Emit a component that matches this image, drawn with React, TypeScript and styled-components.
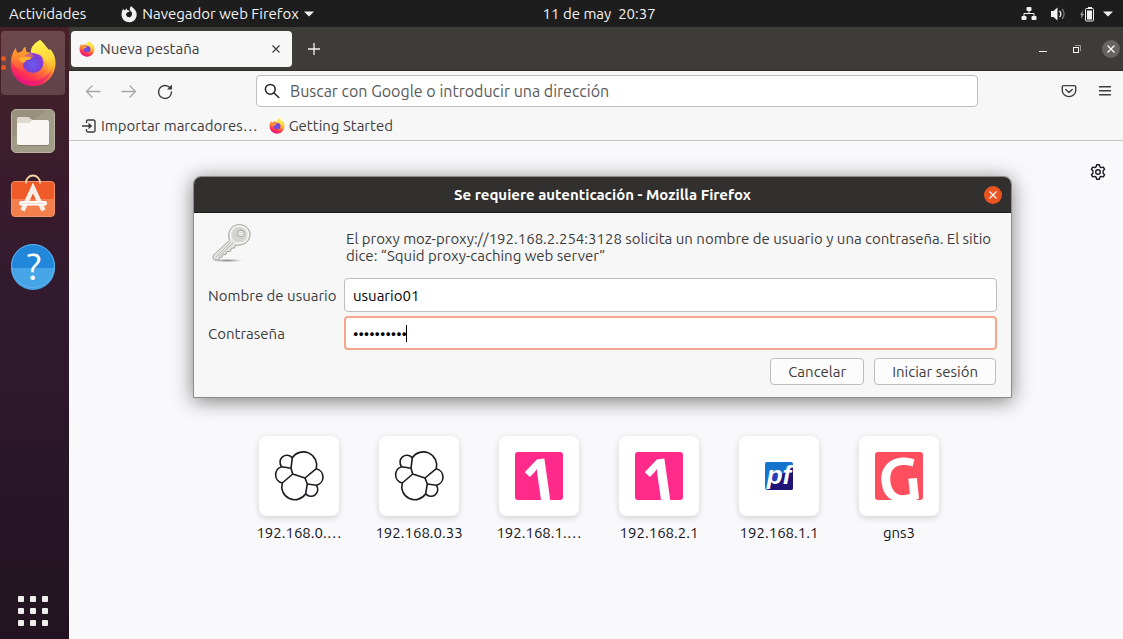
import React from "react";
import styled, { createGlobalStyle } from "styled-components";

const GlobalStyle = createGlobalStyle`
  *, *::before, *::after { box-sizing: border-box; }
  html, body, #root { height: 100%; margin: 0; }
  body, button, input {
    font-family: Ubuntu, "Noto Sans", "Open Sans", sans-serif;
    font-size: 15px;
  }
  button { margin: 0; padding: 0; border: 0; background: none; color: inherit; cursor: pointer; }
  svg { display: block; flex: none; overflow: visible; }
`;

const Desktop = styled.div`
  display: flex;
  flex-direction: column;
  min-height: 100%;
  overflow: hidden;
`;

/* ---------- GNOME top bar ---------- */

const TopBar = styled.header`
  display: grid;
  grid-template-columns: 7fr auto 6fr;
  align-items: center;
  height: 27px;
  padding: 0 10px 0 9px;
  background: #1d1d1d;
  color: #f2f2f2;
  line-height: 27px;
`;

const TopGroup = styled.div<{ $end?: boolean; $gap: number }>`
  display: flex;
  align-items: center;
  justify-content: ${(p) => (p.$end ? "flex-end" : "flex-start")};
  gap: ${(p) => p.$gap}px;
`;

const TopButton = styled.button`
  display: flex;
  align-items: center;
  gap: 5px;
  height: 27px;
  white-space: pre;
`;

/* ---------- Dock ---------- */

const Workspace = styled.div`
  display: flex;
  flex: 1;
`;

const Dock = styled.nav`
  display: flex;
  flex-direction: column;
  gap: 4px;
  width: 69px;
  padding: 4px 4px 13px 1px;
  background: linear-gradient(#4a2027 0%, #40202a 11%, #3a1b2b 25%, #301a2e 45%, #2a1728 70%, #211420 100%);
`;

const DockButton = styled.button<{ $active?: boolean }>`
  position: relative;
  display: grid;
  place-items: center;
  width: 64px;
  height: 64px;
  border-radius: 4px;
  background: ${(p) => (p.$active ? "linear-gradient(#6b484b, #62434c)" : "none")};
`;

const RunningDots = styled.span`
  position: absolute;
  left: 0;
  top: 25px;
  display: flex;
  flex-direction: column;
  gap: 4px;

  &::before, &::after {
    content: "";
    width: 5px;
    height: 5px;
    border-radius: 50%;
    background: #e95420;
  }
`;

const AppsButton = styled.button`
  display: grid;
  grid-template-columns: repeat(3, 6px);
  gap: 6px;
  margin: auto auto 0 17px;
`;

const AppsDot = styled.span`
  width: 6px;
  height: 6px;
  border-radius: 1px;
  background: #eeeeec;
`;

/* ---------- Browser window ---------- */

const BrowserWindow = styled.main`
  position: relative;
  display: flex;
  flex: 1;
  flex-direction: column;
  min-width: 0;
  background: #f9f9fb;
`;

const TabBar = styled.div`
  display: flex;
  align-items: center;
  height: 44px;
  padding: 0 3px 0 2px;
  border-bottom: 1px solid #2c2b29;
  background: #3d3c39;
  color: #f2f2f2;
`;

const Tab = styled.div`
  display: flex;
  align-items: center;
  gap: 5px;
  width: 221px;
  height: 36px;
  padding: 0 8px;
  border-radius: 4px;
  background: #f7f7f7;
  color: #3d3d3d;
`;

const TabTitle = styled.span`
  flex: 1;
`;

const IconButton = styled.button<{ $size?: number }>`
  display: grid;
  place-items: center;
  width: ${(p) => p.$size ?? 16}px;
  height: ${(p) => p.$size ?? 16}px;
`;

const WindowControls = styled.div`
  display: flex;
  align-items: center;
  gap: 16px;
  margin-left: auto;
`;

const RoundClose = styled.button<{ $accent?: boolean }>`
  display: grid;
  place-items: center;
  width: 18px;
  height: 18px;
  border-radius: 50%;
  background: ${(p) => (p.$accent ? "#e95420" : "#656463")};
  color: #fff;
`;

const NavBar = styled.div`
  display: flex;
  align-items: center;
  gap: 20px;
  height: 40px;
  padding: 0 10px 0 16px;
  background: #f7f7f7;
  color: #3d3d3d;
`;

const UrlBar = styled.label`
  display: flex;
  align-items: center;
  gap: 10px;
  flex: 1;
  height: 32px;
  margin: 0 63px;
  padding: 0 7px;
  border: 1px solid #bdbdbd;
  border-radius: 4px;
  background: #fff;
`;

const UrlInput = styled.input`
  flex: 1;
  min-width: 0;
  padding: 0;
  border: 0;
  outline: 0;
  background: transparent;
  font-size: 16px;

  &::placeholder { color: #5a5a5a; opacity: 1; }
`;

const BookmarksBar = styled.div`
  display: flex;
  align-items: center;
  gap: 11px;
  height: 30px;
  padding: 0 12px;
  border-bottom: 1px solid #c2c2c2;
  background: #f7f7f7;
`;

const Bookmark = styled.a`
  display: flex;
  align-items: center;
  gap: 4px;
  color: #3d3d3d;
  text-decoration: none;
  white-space: nowrap;
`;

const NewTabPage = styled.section`
  display: flex;
  flex-direction: column;
  padding: 23px 17px 0 23px;
`;

const SettingsButton = styled(IconButton)`
  align-self: flex-end;
`;

const Shortcuts = styled.div`
  display: flex;
  justify-content: center;
  padding-top: 256px;
`;

const Shortcut = styled.a`
  display: flex;
  flex-direction: column;
  align-items: center;
  gap: 8px;
  width: 120px;
  color: #15141a;
  line-height: 18px;
  text-decoration: none;
`;

const ShortcutTile = styled.span`
  display: grid;
  place-items: center;
  width: 80px;
  height: 80px;
  border-radius: 8px;
  background: #fff;
  box-shadow: 0 2px 6px rgba(58, 57, 68, 0.2);
`;

/* ---------- Authentication dialog ---------- */

const Dialog = styled.form`
  position: absolute;
  top: 149px;
  left: 124px;
  right: 111px;
  border: 1px solid #8a8a8a;
  border-radius: 8px 8px 0 0;
  background: #f7f7f7;
  box-shadow: 0 3px 20px rgba(0, 0, 0, 0.5);
  color: #3d3d3d;
`;

const DialogTitleBar = styled.div`
  display: grid;
  grid-template-columns: 18px 1fr 18px;
  align-items: center;
  height: 36px;
  padding: 0 9px;
  border-bottom: 1px solid #1f1c1c;
  border-radius: 7px 7px 0 0;
  background: #322f2f;
  color: #fff;
`;

const DialogTitle = styled.h1`
  grid-column: 2;
  margin: 0;
  font-size: 15px;
  font-weight: 700;
  text-align: center;
`;

const DialogBody = styled.div`
  display: grid;
  grid-template-columns: 136px 1fr;
  row-gap: 4px;
  align-items: center;
  padding: 9px 14px 12px;
`;

const KeyCell = styled.div`
  align-self: start;
  padding-left: 3px;
`;

const Message = styled.p`
  margin: 0;
  padding: 8px 2px 10px;
  line-height: 17px;
`;

const FieldLabel = styled.label`
  white-space: nowrap;
`;

const Field = styled.div`
  position: relative;
`;

const TextInput = styled.input<{ $focused?: boolean }>`
  display: block;
  width: 100%;
  height: 34px;
  padding: 0 ${(p) => (p.$focused ? 7 : 8)}px;
  border: ${(p) => (p.$focused ? "2px solid #f4a78c" : "1px solid #bdbdbd")};
  border-radius: 4px;
  outline: 0;
  background: #fff;
  color: #000;
`;

const Caret = styled.span`
  position: absolute;
  left: 62px;
  top: 9px;
  width: 1px;
  height: 17px;
  background: #000;
`;

const DialogActions = styled.div`
  display: flex;
  grid-column: 1 / -1;
  justify-content: flex-end;
  gap: 10px;
  padding: 4px 1px 0 0;
`;

const DialogButton = styled.button`
  height: 27px;
  padding: 0 17px;
  border: 1px solid #bdbdbd;
  border-radius: 4px;
  background: #fcfcfc;
`;

/* ---------- Icons ---------- */

const FirefoxIcon = ({ size, id }: { size: number; id: string }) => (
  <svg width={size} height={size} viewBox="0 0 48 48" aria-hidden="true">
    <defs>
      <linearGradient id={`${id}-body`} x1="0.82" y1="0.1" x2="0.3" y2="1">
        <stop offset="0" stopColor="#fff44f" />
        <stop offset="0.3" stopColor="#ffc02e" />
        <stop offset="0.55" stopColor="#ff7139" />
        <stop offset="0.8" stopColor="#ff2d55" />
        <stop offset="1" stopColor="#e31587" />
      </linearGradient>
      <radialGradient id={`${id}-globe`} cx="0.5" cy="0.6" r="0.6">
        <stop offset="0" stopColor="#6a5cf0" />
        <stop offset="0.6" stopColor="#7542d6" />
        <stop offset="1" stopColor="#a33be0" />
      </radialGradient>
      <linearGradient id={`${id}-flame`} x1="0.4" y1="0" x2="0.6" y2="1">
        <stop offset="0" stopColor="#fff44f" />
        <stop offset="0.6" stopColor="#ffd43a" />
        <stop offset="1" stopColor="#ff9a27" stopOpacity="0.3" />
      </linearGradient>
      <linearGradient id={`${id}-fox`} x1="0" y1="0" x2="0.4" y2="1">
        <stop offset="0" stopColor="#ffa52a" />
        <stop offset="1" stopColor="#ff7a2c" stopOpacity="0.2" />
      </linearGradient>
    </defs>
    <path
      d="M31 1C35 4 37 8 40 11l1-1c4 4 5.500 9 5.500 14C46.500 37 36.500 47 24 47S1.800 37 1.800 25C1.800 18 4 13 7 9c0 2 .5 4 1.500 5 2-1 4-1 5-2 .5-2 1.500-3.200 3-3.900-.3 2 .5 4 1.500 5.200 2 0 3 .4 4 1C21 8 26 4 31 1z"
      fill={`url(#${id}-body)`}
    />
    <circle cx="24" cy="23.500" r="10.500" fill={`url(#${id}-globe)`} />
    <path d="M31 1c5 4 6 8 10 12 5 6 5 17-1 23-2-4 0-10-4-15-3-5-8-7-14-7C22 8 26 4 31 1z" fill={`url(#${id}-flame)`} />
    <path d="M7 9c0 2 .5 4 1.500 5 2-1 4-1 5-2 .5-2 1.500-3.200 3-3.900-.3 2 .5 4 1.500 5.200 3 .2 5 1.700 6.500 3.700 0 2-5 2-6 3-1 1-1 3-3 4-2.500 1.500-2 6 0 9-7-2-12-7-13.500-12C3 16 4.500 12 7 9z" fill={`url(#${id}-fox)`} />
    <path d="M9 20c4-3 8-2 13-2 1 1.500-1 3-4 3-1 0-2 2-4 3-2-2-3-3-5-4z" fill="#ffb02e" />
    <path d="M3 29c2 7 9 13 19 13 9 0 17-4 21-12-3 10-10 16-19 16S6 40 3 29z" fill="#e6157f" opacity=".55" />
  </svg>
);

const FirefoxSymbolic = () => (
  <svg width="16" height="16" viewBox="0 0 16 16" fill="#f2f2f2" aria-hidden="true">
    <path
      fillRule="evenodd"
      d="M10.200 0c1 1.300 2.300 2 3.400 3.400A7.600 7.600 0 1 1 .6 7.500C.7 5.500 1.300 4 2.300 2.700l.6 1.600 1.500-.4c.2-.8.6-1.300 1.200-1.700.1 1 .4 1.700 1.300 2.100.7.200 1.300.3 1.800.9-.4.8-1.900.8-2.500 1.300C5 7.300 4.800 8.500 5.300 9.600c1 2.100 4 2.200 5.200.4 1.300-2.200.2-4.500-1.400-5.400C8.500 2.800 9 1.200 10.200 0z"
    />
  </svg>
);

const FilesIcon = () => (
  <svg width="46" height="46" viewBox="0 0 46 46" aria-hidden="true">
    <rect x="1.500" y="1.500" width="43" height="43" rx="4.500" fill="#99917d" stroke="#b9b4a3" />
    <path d="M2 30 36 2h5a3 3 0 0 1 3 3v36a3 3 0 0 1-3 3H5a3 3 0 0 1-3-3z" fill="#a9a28e" opacity=".6" />
    <path d="M7 11a2 2 0 0 1 2-2h9c2 0 3 3 5 3h14v8H7z" fill="#dedace" />
    <path d="M7 15h12c2 0 2-3 5-3h13a2 2 0 0 1 2 2v21a2 2 0 0 1-2 2H9a2 2 0 0 1-2-2z" fill="#f8f7f5" />
    <path d="M8 37.500h30" stroke="#827b68" />
  </svg>
);

const SoftwareIcon = () => (
  <svg width="46" height="46" viewBox="0 3 46 46" aria-hidden="true">
    <rect x="1.500" y="8.500" width="43" height="35" rx="3.500" fill="#ee5a28" stroke="#f0936a" />
    <path d="M2 26h42v14a3 3 0 0 1-3 3H5a3 3 0 0 1-3-3z" fill="#f27f4c" />
    <path d="M16 10.500v-1a7 7 0 0 1 14 0v1" fill="none" stroke="#f5d6a0" strokeWidth="1.800" />
    <path d="M12.500 37.500 23 15l10.500 22.500" fill="none" stroke="#fbeee8" strokeWidth="4.600" />
    <rect x="9" y="28" width="28" height="4.600" rx="2.300" fill="#fff" />
    <path d="M11 30.300h24" stroke="#e9c6b6" strokeWidth=".8" />
  </svg>
);

const HelpIcon = () => (
  <svg width="46" height="46" viewBox="0 1 46 46" aria-hidden="true">
    <circle cx="23" cy="23" r="22" fill="#2087da" />
    <path d="M1 25h44a22 22 0 0 1-44 0z" fill="#45a5e6" />
    <circle cx="23" cy="23" r="21.500" fill="none" stroke="#62b2ea" />
    <text x="24" y="37" textAnchor="middle" fontSize="38" fill="#fff">?</text>
  </svg>
);

const ArrowIcon = ({ back }: { back?: boolean }) => (
  <svg width="16" height="16" viewBox="0 0 16 16" fill="none" stroke="#a6a6a6" strokeWidth="1.300" strokeLinecap="round" strokeLinejoin="round" aria-hidden="true">
    <path d={back ? "M15 8.500H1.500M7 3 1.500 8.500 7 14" : "M1 8.500h13.500M9 3 14.500 8.500 9 14"} />
  </svg>
);

const ReloadIcon = () => (
  <svg width="16" height="16" viewBox="0 0 16 16" fill="none" stroke="#3d3d3d" strokeWidth="1.400" strokeLinecap="round" aria-hidden="true">
    <path d="M13 4.800A6.500 6.500 0 1 0 14.500 9" />
    <path d="M15 1.500v5h-5z" fill="#3d3d3d" stroke="none" />
  </svg>
);

const SearchIcon = () => (
  <svg width="16" height="16" viewBox="0 0 16 16" fill="none" stroke="#222" strokeWidth="1.500" strokeLinecap="round" aria-hidden="true">
    <circle cx="6.300" cy="6.300" r="4.900" />
    <path d="m10 10 4.800 4.500" />
  </svg>
);

const CrossIcon = ({ size }: { size: number }) => (
  <svg width={size} height={size} viewBox="0 0 8 8" fill="none" stroke="currentColor" strokeWidth="1.200" aria-hidden="true">
    <path d="m.5.5 7 7m0-7-7 7" />
  </svg>
);

const PlusIcon = () => (
  <svg width="12" height="12" viewBox="0 0 12 12" stroke="currentColor" strokeWidth="1.300" aria-hidden="true">
    <path d="M6 0v12M0 6h12" />
  </svg>
);

const MinimizeIcon = () => (
  <svg width="10" height="10" viewBox="0 0 10 10" aria-hidden="true">
    <path d="M1 7.500h8" stroke="#f2f2f2" />
  </svg>
);

const RestoreIcon = () => (
  <svg width="10" height="10" viewBox="0 0 10 10" fill="none" aria-hidden="true">
    <path d="M3 1.500h5.500V7" stroke="#9b9a98" />
    <rect x="1.500" y="3.500" width="5" height="5" stroke="#f2f2f2" />
  </svg>
);

const ImportIcon = () => (
  <svg width="16" height="16" viewBox="0 0 16 16" fill="none" stroke="#3d3d3d" strokeWidth="1.400" aria-hidden="true">
    <path d="M5.500 5V3.500a1.500 1.500 0 0 1 1.500-1.500h5.500A1.500 1.500 0 0 1 14 3.500v9a1.500 1.500 0 0 1-1.500 1.500H7a1.500 1.500 0 0 1-1.500-1.500V11M1 8h8" />
    <path d="m7.500 4.800 3.800 3.200-3.800 3.200z" fill="#3d3d3d" stroke="none" />
  </svg>
);

const PocketIcon = () => (
  <svg width="16" height="16" viewBox="0 0 16 16" fill="none" stroke="#3d3d3d" strokeWidth="1.400" strokeLinecap="round" strokeLinejoin="round" aria-hidden="true">
    <path d="M2.600 2.600h10.800a1.300 1.300 0 0 1 1.300 1.300V7.400a6.700 6.200 0 0 1-13.400 0V3.900a1.300 1.300 0 0 1 1.300-1.300z" />
    <path d="m4.800 6.500 3.200 3 3.200-3" />
  </svg>
);

const MenuIcon = () => (
  <svg width="16" height="16" viewBox="0 0 16 16" stroke="#3d3d3d" strokeWidth="1.400" strokeLinecap="round" aria-hidden="true">
    <path d="M2.500 3.700h11M2.500 7.700h11M2.500 11.700h11" />
  </svg>
);

const GearIcon = () => (
  <svg width="16" height="16" viewBox="0 0 16 16" fill="none" stroke="#1c1b22" strokeWidth="1.400" strokeLinejoin="round" aria-hidden="true">
    <path d="M6.700.8h2.600l.6 2 1.300.8 2.100-.5 1.300 2.200-1.500 1.500v2.400l1.500 1.500-1.300 2.200-2.100-.5-1.300.8-.6 2H6.700l-.6-2-1.300-.8-2.100.5-1.300-2.200 1.500-1.500V6.800L1.400 5.300l1.300-2.200 2.100.5 1.300-.8z" />
    <circle cx="8" cy="8" r="2.300" />
  </svg>
);

const NetworkIcon = () => (
  <svg width="16" height="16" viewBox="0 0 16 16" fill="#f2f2f2" aria-hidden="true">
    <rect x="5.500" y="1" width="5" height="4" rx="1" />
    <rect x=".5" y="10" width="5" height="4" rx="1" />
    <rect x="10.500" y="10" width="5" height="4" rx="1" />
    <path d="M8 4v3.500M3 11V7.500h10V11" fill="none" stroke="#f2f2f2" />
  </svg>
);

const VolumeIcon = () => (
  <svg width="16" height="16" viewBox="0 0 16 16" fill="none" aria-hidden="true">
    <path d="M1 5h2.500L7.500 1.500v13L3.500 11H1z" fill="#f2f2f2" />
    <path d="M9.500 5a4 4 0 0 1 0 6" stroke="#f2f2f2" strokeWidth="1.300" />
    <path d="M12 3a7 7 0 0 1 0 10" stroke="#777" strokeWidth="1.300" />
  </svg>
);

const BatteryIcon = () => (
  <svg width="16" height="16" viewBox="0 0 16 16" fill="none" aria-hidden="true">
    <path d="M4 4 1 9h1.500L2 13l3-5H3.500z" fill="#999" />
    <path d="M9 1.500h4M7.500 2.500h6a1 1 0 0 1 1 1v10.500a1 1 0 0 1-1 1h-6a1 1 0 0 1-1-1V3.500a1 1 0 0 1 1-1z" stroke="#f2f2f2" />
    <path d="M8 4.500h5v9H8z" fill="#f2f2f2" />
  </svg>
);

const DownIcon = () => (
  <svg width="10" height="6" viewBox="0 0 10 6" fill="#f2f2f2" aria-hidden="true">
    <path d="M0 .5h10L5 5.500z" />
  </svg>
);

const KeyIcon = () => (
  <svg width="42" height="42" viewBox="0 0 42 42" aria-hidden="true">
    <defs>
      <linearGradient id="key-metal" x1="0" y1="0" x2="1" y2="1">
        <stop offset="0" stopColor="#f4f4f2" />
        <stop offset="1" stopColor="#d4d5d1" />
      </linearGradient>
      <radialGradient id="key-shadow">
        <stop offset="0" stopColor="#8a8a86" />
        <stop offset="1" stopColor="#8a8a86" stopOpacity="0" />
      </radialGradient>
    </defs>
    <ellipse cx="16" cy="38.500" rx="16" ry="1.700" fill="url(#key-shadow)" />
    <path
      d="M18.500 18.500C16 12 19 3.500 27 2.700c8-.7 13 5.300 12 11.300-1 7-8 10-14.500 9l-1 3-3 .3-1 3-3.500.2-1 2.800-3 .2-1 2.500-2.500.5-1 2.500H3.500L2 36v-2.500z"
      fill="url(#key-metal)"
      stroke="#a0a29d"
      strokeLinejoin="round"
    />
    <path d="M20 17.500C18 12 21 4.800 27 4.200c6.500-.5 11 4.800 10.300 9.800-.8 5.500-7 8.500-13.300 7" fill="none" stroke="#fff" />
    <circle cx="28" cy="12.500" r="7.500" fill="#d3d4d0" />
    <circle cx="30" cy="11.500" r="3.300" fill="#f7f7f7" stroke="#a0a29d" />
    <circle cx="30" cy="11.500" r="1.400" fill="#fff" stroke="#b8b9b5" strokeWidth=".7" />
    <path d="M4.500 35.500 20 20M8 34.500 22 21" stroke="#b4b6b1" strokeWidth=".9" />
  </svg>
);

const ClusterLogo = () => (
  <svg width="48" height="48" viewBox="0 0 48 48" fill="none" stroke="#1c1b22" strokeWidth="1.600" strokeLinejoin="round" aria-hidden="true">
    <path d="M17.300 5.700A13.400 13.400 0 0 1 41.300 16.700L30 26 17.700 22 16 16.300z" />
    <path d="M17.700 22 7.300 31A13 13 0 0 0 30.700 41.700L32.300 32 30 26" />
    <path d="M16 16.300 6.700 14.700A8.400 8.400 0 0 0 7.300 31M6.700 14.700A6.300 6.300 0 0 1 17.300 5.700" />
    <path d="M41.300 16.700A8.500 8.500 0 0 1 41.300 33.300L32.300 32M41.300 33.300A6.300 6.300 0 0 1 30.700 41.700" />
  </svg>
);

const LetterLogo = ({ letter, color, x, y, size, angle, family }: { letter: string; color: string; x: number; y: number; size: number; angle: number; family: string }) => (
  <svg width="48" height="48" viewBox="0 0 48 48" aria-hidden="true">
    <rect width="48" height="48" rx="3" fill={color} />
    <text x={x} y={y} fontSize={size} fontFamily={family} fontWeight="700" textAnchor="middle" fill="#fff" transform={`rotate(${angle} 24 24)`}>
      {letter}
    </text>
  </svg>
);

const PfLogo = () => (
  <svg width="28" height="28" viewBox="0 0 28 28" aria-hidden="true">
    <rect width="28" height="28" rx="2" fill="#1475cf" />
    <path d="M24 8 28 5v21a2 2 0 0 1-2 2H3L6 19z" fill="#1f1378" />
    <circle cx="9" cy="15" r="5" fill="#2740b8" />
    <text x="14" y="22" textAnchor="middle" fontFamily="Liberation Sans, sans-serif" fontSize="26" fontWeight="700" fontStyle="italic" fill="#fff">pf</text>
  </svg>
);

const OneLogo = () => <LetterLogo letter="1" color="#ff2a8a" x={24} y={50} size={60} angle={-8} family="Open Sans, sans-serif" />;

const shortcuts = [
  { label: "192.168.0.…", logo: <ClusterLogo /> },
  { label: "192.168.0.33", logo: <ClusterLogo /> },
  { label: "192.168.1.…", logo: <OneLogo /> },
  { label: "192.168.2.1", logo: <OneLogo /> },
  { label: "192.168.1.1", logo: <PfLogo /> },
  { label: "gns3", logo: <LetterLogo letter="G" color="#ff4f5e" x={24} y={50} size={62} angle={-6} family="Ubuntu, Open Sans, sans-serif" /> },
];

export default function App() {
  return (
    <Desktop>
      <GlobalStyle />
      <TopBar>
        <TopGroup $gap={35}>
          <TopButton>Actividades</TopButton>
          <TopButton>
            <FirefoxSymbolic />
            Navegador web Firefox
            <DownIcon />
          </TopButton>
        </TopGroup>
        <TopButton>{"11 de may  20:37"}</TopButton>
        <TopGroup $end $gap={8}>
          <TopGroup $gap={13}>
            <NetworkIcon />
            <VolumeIcon />
            <BatteryIcon />
          </TopGroup>
          <DownIcon />
        </TopGroup>
      </TopBar>

      <Workspace>
        <Dock aria-label="Aplicaciones">
          <DockButton $active aria-label="Firefox">
            <RunningDots />
            <FirefoxIcon size={48} id="fx-dock" />
          </DockButton>
          <DockButton aria-label="Archivos"><FilesIcon /></DockButton>
          <DockButton aria-label="Software"><SoftwareIcon /></DockButton>
          <DockButton aria-label="Ayuda"><HelpIcon /></DockButton>
          <AppsButton aria-label="Mostrar aplicaciones">
            {Array.from({ length: 9 }, (_, i) => <AppsDot key={i} />)}
          </AppsButton>
        </Dock>

        <BrowserWindow>
          <TabBar>
            <Tab>
              <FirefoxIcon size={16} id="fx-tab" />
              <TabTitle>Nueva pestaña</TabTitle>
              <IconButton aria-label="Cerrar pestaña"><CrossIcon size={8} /></IconButton>
            </Tab>
            <IconButton $size={44} aria-label="Nueva pestaña"><PlusIcon /></IconButton>
            <WindowControls>
              <IconButton $size={18} aria-label="Minimizar"><MinimizeIcon /></IconButton>
              <IconButton $size={18} aria-label="Restaurar"><RestoreIcon /></IconButton>
              <RoundClose aria-label="Cerrar"><CrossIcon size={8} /></RoundClose>
            </WindowControls>
          </TabBar>

          <NavBar>
            <IconButton aria-label="Atrás"><ArrowIcon back /></IconButton>
            <IconButton aria-label="Adelante"><ArrowIcon /></IconButton>
            <IconButton aria-label="Recargar"><ReloadIcon /></IconButton>
            <UrlBar>
              <SearchIcon />
              <UrlInput aria-label="Dirección" placeholder="Buscar con Google o introducir una dirección" />
            </UrlBar>
            <IconButton aria-label="Pocket"><PocketIcon /></IconButton>
            <IconButton aria-label="Menú"><MenuIcon /></IconButton>
          </NavBar>

          <BookmarksBar>
            <Bookmark href="#importar"><ImportIcon />Importar marcadores…</Bookmark>
            <Bookmark href="#inicio"><FirefoxIcon size={16} id="fx-mark" />Getting Started</Bookmark>
          </BookmarksBar>

          <NewTabPage>
            <SettingsButton aria-label="Personalizar"><GearIcon /></SettingsButton>
            <Shortcuts>
              {shortcuts.map((s) => (
                <Shortcut key={s.label} href="#sitio">
                  <ShortcutTile>{s.logo}</ShortcutTile>
                  {s.label}
                </Shortcut>
              ))}
            </Shortcuts>
          </NewTabPage>

          <Dialog role="dialog" aria-labelledby="auth-title" onSubmit={(e) => e.preventDefault()}>
            <DialogTitleBar>
              <DialogTitle id="auth-title">Se requiere autenticación - Mozilla Firefox</DialogTitle>
              <RoundClose $accent type="button" aria-label="Cerrar"><CrossIcon size={8} /></RoundClose>
            </DialogTitleBar>
            <DialogBody>
              <KeyCell><KeyIcon /></KeyCell>
              <Message>
                El proxy moz-proxy://192.168.2.254:3128 solicita un nombre de usuario y una contraseña. El sitio dice: “Squid proxy-caching web server”
              </Message>
              <FieldLabel htmlFor="user">Nombre de usuario</FieldLabel>
              <Field><TextInput id="user" defaultValue="usuario01" /></Field>
              <FieldLabel htmlFor="pass">Contraseña</FieldLabel>
              <Field>
                <TextInput id="pass" type="password" defaultValue="contrasena" $focused />
                <Caret />
              </Field>
              <DialogActions>
                <DialogButton type="button">Cancelar</DialogButton>
                <DialogButton type="submit">Iniciar sesión</DialogButton>
              </DialogActions>
            </DialogBody>
          </Dialog>
        </BrowserWindow>
      </Workspace>
    </Desktop>
  );
}
